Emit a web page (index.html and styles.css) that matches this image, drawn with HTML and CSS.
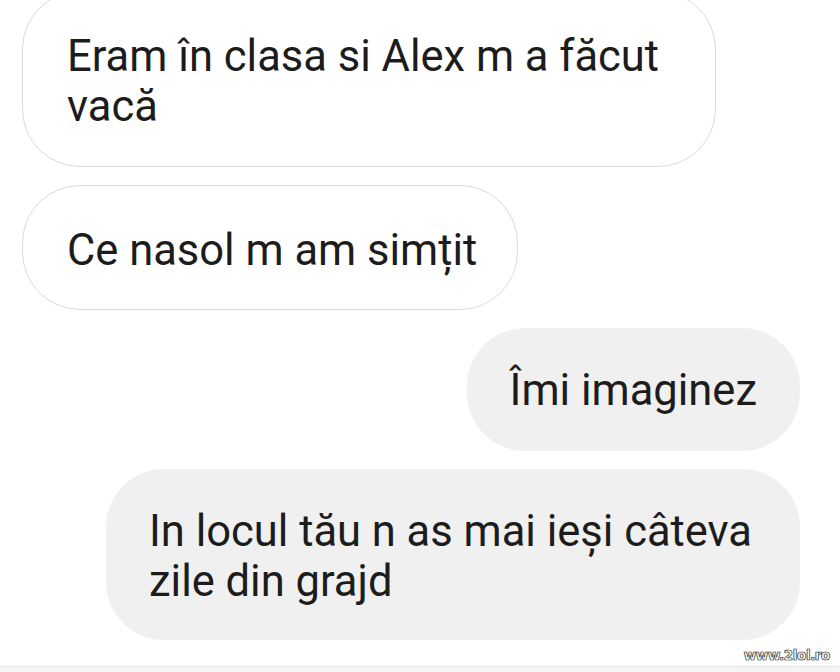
FILE: index.html
```html
<!DOCTYPE html>
<html lang="ro">
<head>
<meta charset="utf-8">
<title>Conversație</title>
<link rel="stylesheet" href="styles.css">
</head>
<body>
<div class="screen">
  <div class="thread">
    <div class="bubble in first">Eram în clasa si Alex m a făcut vacă</div>
    <div class="bubble in">Ce nasol m am simțit</div>
    <div class="bubble out">Îmi imaginez</div>
    <div class="bubble out last">In locul tău n as mai ieși câteva zile din grajd</div>
  </div>
  <div class="bottom-bar"></div>
  <div class="watermark">www.2lol.ro</div>
</div>
</body>
</html>
```
FILE: styles.css
```css
html, body {
  margin: 0;
  padding: 0;
  background: #ffffff;
}
.screen {
  position: relative;
  width: 840px;
  height: 672px;
  overflow: hidden;
  display: flex;
  flex-direction: column;
  font-family: Roboto, "Noto Sans", "Liberation Sans", sans-serif;
}
.thread {
  display: flex;
  flex-direction: column;
  gap: 18px;
  margin-top: -9px;
  flex: 1;
}
.bubble {
  box-sizing: border-box;
  font-size: 43.5px;
  line-height: 50px;
  color: #1c1c1c;
  border-radius: 58px;
  max-width: 694px;
}
.bubble.in {
  align-self: flex-start;
  margin-left: 22px;
  padding: 40px 40px 33px 44px;
  border: 1.5px solid #dadada;
  background: #ffffff;
}
.bubble.first {
  padding-bottom: 34px;
}
.bubble.out {
  align-self: flex-end;
  margin-right: 40px;
  padding: 38px 43px 35px 43px;
  background: #f0f0f0;
}
.bubble.last {
  padding-bottom: 33px;
}
.bottom-bar {
  height: 5px;
  border-top: 1px solid #e6e6e6;
  background: #f4f4f4;
}
.watermark {
  position: absolute;
  right: 10px;
  bottom: 9px;
  font-family: "DejaVu Sans", sans-serif;
  font-weight: bold;
  font-size: 13.5px;
  letter-spacing: -0.4px;
  color: #ffffff;
  -webkit-text-stroke: 0.6px #333;
  text-shadow: 0 0 1px #333;
}
```
